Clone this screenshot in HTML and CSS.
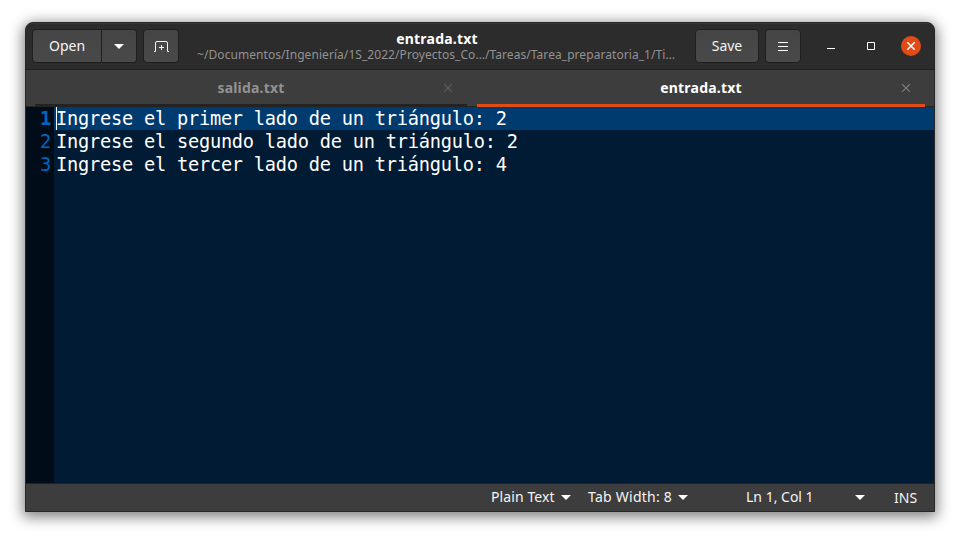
FILE: index.html
```
<!DOCTYPE html>
<html lang="es">
<head>
<meta charset="utf-8">
<title>entrada.txt</title>
<link rel="stylesheet" href="styles.css">
</head>
<body>
<main class="window">
  <header class="header">
    <div class="split">
      <button class="btn open">Open</button>
      <button class="btn drop"><svg width="10" height="5" viewBox="0 0 10 5"><path d="M0 0H10L5 5Z" fill="#fff"/></svg></button>
    </div>
    <button class="btn icon newtab"><svg width="16" height="12" viewBox="0 0 16 12" fill="none" stroke="#f4f4f4"><path d="M0 10.5H1.5V2Q1.5 .5 3 .5H12Q13.5 .5 13.5 2V10.5H15"/><path d="M7.5 4V9M5 6.5H10"/></svg></button>
    <div class="titles">
      <div class="title">entrada.txt</div>
      <div class="path">~/Documentos/Ingeniería/1S_2022/Proyectos_Co…/Tareas/Tarea_preparatoria_1/Ti…</div>
    </div>
    <button class="btn save">Save</button>
    <button class="btn icon menu"><svg width="10" height="9" viewBox="0 0 10 9"><path d="M0 .5H10M0 4.5H10M0 8.5H10" stroke="#fff"/></svg></button>
    <div class="controls">
      <svg width="8" height="8" viewBox="0 0 8 8"><path d="M0 6.5H8" stroke="#fff"/></svg>
      <svg width="8" height="8" viewBox="0 0 8 8"><path d="M.5 .5H7.5V7.5H.5Z" fill="none" stroke="#fff"/></svg>
      <svg width="20" height="20" viewBox="0 0 20 20"><circle cx="10" cy="10" r="10" fill="#e24b17"/><path d="M6.3 6.3L13.7 13.7M13.7 6.3L6.3 13.7" stroke="#fff" stroke-width="1.5"/></svg>
    </div>
  </header>
  <nav class="tabs">
    <div class="tab"><span class="name">salida.txt</span><svg class="x" width="8" height="8" viewBox="0 0 8 8"><path d="M0 0L8 8M8 0L0 8" stroke="#626262" stroke-width="1.1"/></svg></div>
    <div class="tab active"><span class="name">entrada.txt</span><svg class="x" width="8" height="8" viewBox="0 0 8 8"><path d="M0 0L8 8M8 0L0 8" stroke="#808080" stroke-width="1.1"/></svg></div>
  </nav>
  <section class="editor">
    <div class="line current"><span class="num">1</span><span class="code">Ingrese el primer lado de un triángulo: 2</span></div>
    <div class="line"><span class="num">2</span><span class="code">Ingrese el segundo lado de un triángulo: 2</span></div>
    <div class="line"><span class="num">3</span><span class="code">Ingrese el tercer lado de un triángulo: 4</span></div>
    <div class="fill"></div>
  </section>
  <footer class="status">
    <span class="item plain">Plain Text</span><svg width="10" height="5" viewBox="0 0 10 5"><path d="M0 0H10L5 5Z" fill="#fff"/></svg>
    <span class="item width">Tab Width: 8</span><svg width="10" height="5" viewBox="0 0 10 5"><path d="M0 0H10L5 5Z" fill="#fff"/></svg>
    <span class="item pos">Ln 1, Col 1</span><svg width="10" height="5" viewBox="0 0 10 5"><path d="M0 0H10L5 5Z" fill="#fff"/></svg>
    <span class="item ins">INS</span>
  </footer>
</main>
</body>
</html>
```
FILE: styles.css
```
* { box-sizing: border-box; }
html, body { margin: 0; height: 100%; background: #fff; overflow: hidden; }
body { padding: 22px 25px 28px; font: 14px/20px "Noto Sans", sans-serif; color: #f4f4f4; }
svg { display: block; flex: none; }
.window {
  display: flex; flex-direction: column; width: 910px; height: 490px;
  border: 1px solid #262626; border-radius: 8px 8px 0 0; overflow: hidden; background: #3d3d3d;
  box-shadow: 0 3px 14px 2px rgba(0,0,0,.5);
}
.header {
  display: flex; flex: none; align-items: flex-start; height: 47px; padding: 6px 0 0 6px;
  background: #2c2c2c; border-bottom: 1px solid #202020; box-shadow: inset 0 1px #383838;
}
.split { display: flex; width: 105px; }
.btn {
  display: flex; align-items: center; justify-content: center; height: 34px; margin: 0; padding: 0;
  border: 1px solid #1f1f1f; border-radius: 4px; color: #f4f4f4; font: inherit;
  background: linear-gradient(#454545, #494949); white-space: nowrap;
}
.open { width: 70px; border-radius: 4px 0 0 4px; }
.drop { width: 35px; border-left: 0; border-radius: 0 4px 4px 0; }
.icon { width: 36px; }
.newtab { margin-left: 6px; }
.newtab svg { margin: 2px 0 0 2px; }
.titles { width: 516px; text-align: center; white-space: nowrap; padding-top: 1px; }
.title { font-weight: 700; line-height: 17px; letter-spacing: .2px; color: #fff; }
.path { margin-top: 1px; font-size: 12px; line-height: 14px; letter-spacing: .06px; text-indent: -2px; color: #929292; }
.save { width: 64px; }
.menu { margin-left: 6px; }
.controls { display: flex; align-items: center; height: 34px; padding-left: 26px; gap: 32px; }
.controls svg:last-child { margin-left: -6px; }
.tabs { display: flex; flex: none; height: 37px; padding: 0 9px; gap: 10px; border-bottom: 1px solid #262626; }
.tab {
  display: flex; align-items: center; width: 432px; height: 37px; padding: 0 15px 0 23px;
  border-bottom: 3px solid #232323; color: #929292; font-weight: 700; letter-spacing: .2px;
}
.tab.active { width: 448px; color: #fff; border-color: #e24b17; }
.name { flex: 1; padding-top: 2px; text-align: center; }
.tab .x { margin-top: 2px; }
.editor {
  display: flex; flex: 1; flex-direction: column; background: #001b33;
  font: 18.67px/23px "DejaVu Sans Mono", monospace; letter-spacing: -.24px;
}
.line { display: flex; flex: none; height: 23px; white-space: pre; background: linear-gradient(90deg, #000d19 28px, transparent 28px); }
.num { width: 28px; padding-right: 3px; text-align: right; color: #0065bf; }
.code { padding-left: 2px; color: #fff; }
.current { background: linear-gradient(90deg, #000d19 28px, #003b70 28px); }
.current .num { font-weight: 700; }
.current .code { margin-left: 2px; padding-left: 0; border-left: 1px solid #fff; text-indent: -1px; }
.fill { flex: 1; background: linear-gradient(90deg, #000d19 28px, transparent 28px); }
.status { display: flex; flex: none; align-items: center; height: 28px; padding-left: 465px; border-top: 1px solid #222; white-space: nowrap; }
.status svg { margin-top: -1px; }
.item { flex: none; padding-bottom: 2px; }
.plain { width: 70px; letter-spacing: .1px; }
.width { width: 90px; margin-left: 17px; letter-spacing: .25px; }
.pos { width: 109px; margin-left: 58px; }
.ins { margin-left: 29px; padding-bottom: 0; }
```
